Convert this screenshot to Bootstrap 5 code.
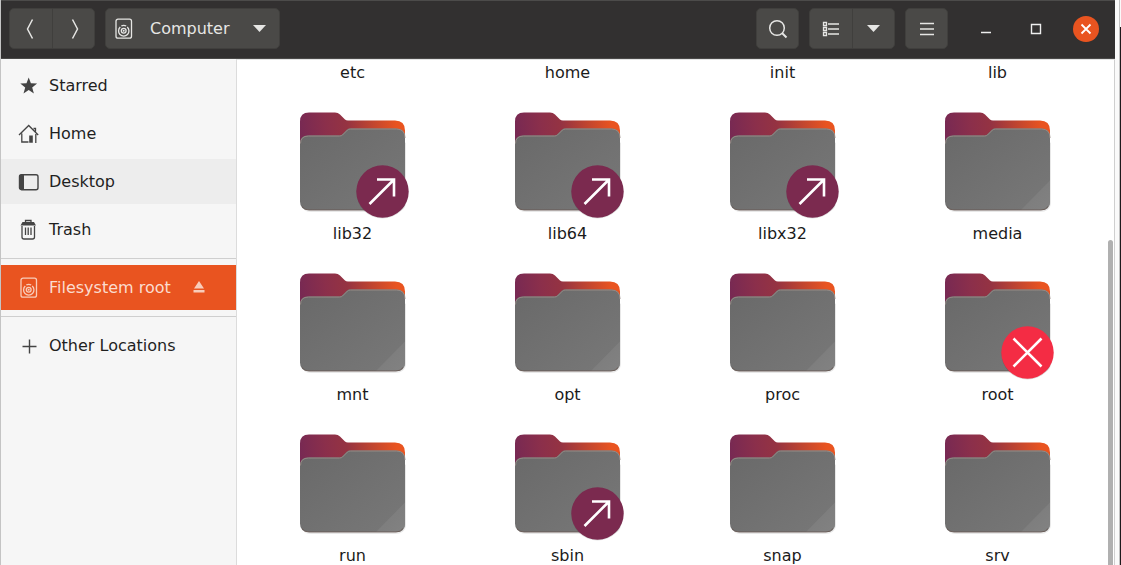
<!DOCTYPE html>
<html lang="en">
<head>
<meta charset="utf-8">
<meta name="viewport" content="width=device-width, initial-scale=1">
<title>Computer</title>
<link href="https://cdn.jsdelivr.net/npm/bootstrap@5.3.0/dist/css/bootstrap.min.css" rel="stylesheet">
<style>
body{font-family:"DejaVu Sans",sans-serif;font-size:16px;line-height:24px;color:#1b1b1b;background:#fafafa}
svg{display:block;flex:none}
.app-window{border-left:1px solid #c4c4c4;min-width:0}
.desk-gap{width:5px;border-right:1px solid #c2c2c2}
.desk-edge{width:1px;margin-top:27px;background:#1d1a1c}
.title-bar{height:59px;gap:10px;background:#323030;border-top:1px solid #4c4b4a;border-bottom:1px solid #4a4948;padding:0 16px 1px 8px}
.tool-btn{--bs-btn-bg:#4a4947;--bs-btn-color:#e6e6e4;--bs-btn-border-color:#403f3d;--bs-btn-hover-bg:#555;--bs-btn-hover-color:#fff;--bs-btn-padding-x:0;--bs-btn-padding-y:0;--bs-btn-border-radius:5px;width:43px;height:41px;font-size:16px}
.btn-group .tool-btn:first-child{width:44px}
.path-btn{width:175px;padding:0 13px 0 7px}
.win-btn{width:26px;height:26px;color:#eee}
.win-set{gap:24px;margin-left:15px}
.close-btn,.close-btn:hover{background:#e95420;color:#fff}
.side-pane{width:236px;background:#f6f6f6;border-right:1px solid #dcdcdc;padding-top:4px}
.place{height:45px;padding:2px 17px 0;color:#1f1f1f;gap:10px}
.place-group{gap:3px}
.place svg{color:#444}
.place.hovered{background:#ededed}
.place-mount,.place-mount .place{background:#e95420;color:#fbdccf}
.place-mount .place{padding-right:0}
.place-mount svg{color:#f8cdbb}
.eject{width:22px;height:22px;margin-left:17px}
.side-line{border-top:1px solid #cfcfcf;opacity:1;margin:6px 0}
.file-pane{border-top:1px solid #e4e4e4;border-right:1px solid #cfcfcf;padding:0 9px 0 8px;background:#fff;min-width:0}
.file-item{padding-top:28px;gap:11px}
.file-item.cut{padding-top:1px}
.scroll-thumb{width:5px;right:1px;top:180px;bottom:0;background:#b0b0b0;border-radius:3px 3px 0 0}
</style>
</head>
<body class="vh-100 d-flex overflow-hidden">
<svg width="0" height="0" class="position-absolute" aria-hidden="true">
  <defs>
    <linearGradient id="backFill" x1="0" y1="20" x2="105" y2="8" gradientUnits="userSpaceOnUse">
      <stop offset="0" stop-color="#772953"/><stop offset=".25" stop-color="#8b2f4b"/><stop offset=".45" stop-color="#953342"/><stop offset=".7" stop-color="#c2462f"/><stop offset=".92" stop-color="#e95420"/>
    </linearGradient>
    <linearGradient id="frontFill" x1="0" y1="0" x2="1" y2="1">
      <stop offset="0" stop-color="#696969"/><stop offset="1" stop-color="#787878"/>
    </linearGradient>
    <linearGradient id="foldFill" x1="0" y1="0" x2="1" y2="1">
      <stop offset=".4" stop-color="#7d7d7d"/><stop offset="1" stop-color="#828282"/>
    </linearGradient>
    <symbol id="folder" viewBox="0 0 105 98" overflow="visible">
      <path d="M2 88v2q0 9 9 9h83q12 0 12-10V30l-3-2z" fill="#000" opacity=".09"/>
      <path d="M0 89V8.500Q0-.5 9-.5h26q3 0 5 2l5 5q1 1 3 1h47q10 0 10 10v60z" fill="url(#backFill)"/>
      <path d="M0 88.500V30.500q0-8 8-8h31q2 0 3-1l5-5q1-1 3-1h46q9 0 9 9v64q0 8.500-9 8.500H9Q0 97 0 88.500z" fill="url(#frontFill)"/>
      <path d="M.5 30.500q0-7.500 8-7.500h31q2 0 3-1l5-5q1-1 3-1h46q8.500 0 8.500 9" fill="none" stroke="#958b86" stroke-width="1"/>
      <path d="M76 97L105 67.500v21q0 8.500-9 8.500z" fill="url(#foldFill)"/>
      <path d="M2 93.500q2 3.500 7 3.500h87q5 0 7-3.500" fill="none" stroke="#65544e" stroke-width=".8"/>
    </symbol>
    <symbol id="linkMark" viewBox="0 0 105 98" overflow="visible">
      <circle cx="82.500" cy="79.500" r="26" fill="#000" opacity=".12"/>
      <circle cx="82.500" cy="78.500" r="26.200" fill="#7b2a4f"/>
      <path d="M69.500 91L94 66.500M77 66.500h17v17" fill="none" stroke="#fff" stroke-width="2.600"/>
    </symbol>
    <symbol id="denyMark" viewBox="0 0 105 98" overflow="visible">
      <circle cx="82.500" cy="79.500" r="26" fill="#000" opacity=".15"/>
      <circle cx="82.500" cy="78.500" r="26.200" fill="#f42c44"/>
      <path d="M68.500 64.500l28 28m0-28l-28 28" fill="none" stroke="#fff" stroke-width="2.600"/>
    </symbol>
    <symbol id="disk" viewBox="0 0 21 22">
      <g fill="none" stroke="currentColor" stroke-width="1.300"><rect x="3" y="1.200" width="15.500" height="19" rx="2"/><path d="M7.300 9A5.200 5.200 0 1 0 14.200 9"/><path d="M8.300 8Q10.700 6.600 13.200 8"/><circle cx="10.700" cy="12.700" r="2.400"/></g>
      <circle cx="10.700" cy="12.700" r="1" fill="currentColor"/>
    </symbol>
  </defs>
</svg>

<main class="app-window flex-fill d-flex flex-column">
  <header class="title-bar d-flex align-items-center">
    <div class="btn-group">
      <button class="btn tool-btn d-flex align-items-center justify-content-center" aria-label="Back"><svg width="20" height="22" fill="none" stroke="currentColor" stroke-width="1.500"><path d="M11.500 1.500L6.500 11l5 9.500"/></svg></button>
      <button class="btn tool-btn d-flex align-items-center justify-content-center" aria-label="Forward"><svg width="20" height="22" fill="none" stroke="currentColor" stroke-width="1.500"><path d="M8.500 1.500l5 9.500-5 9.500"/></svg></button>
    </div>
    <button class="btn tool-btn path-btn d-flex align-items-center me-auto">
      <svg class="me-3" width="21" height="22"><use href="#disk"/></svg><span>Computer</span>
      <svg class="ms-auto" width="13" height="7" fill="currentColor"><path d="M0 0h13L6.500 7z"/></svg>
    </button>
    <button class="btn tool-btn d-flex align-items-center justify-content-center" aria-label="Search"><svg width="22" height="22" fill="none" stroke="currentColor"><circle cx="10" cy="10" r="7.300" stroke-width="1.500"/><path d="M15 15l4.500 4.500" stroke-width="2"/></svg></button>
    <div class="btn-group">
      <button class="btn tool-btn d-flex align-items-center justify-content-center" aria-label="List view"><svg width="18" height="18" fill="none" stroke="currentColor" stroke-width="1.300"><path d="M1.500 2.500h3v3h-3zM1.500 7.500h3v3h-3zM1.500 12.500h3v3h-3zM6 4h11M6 9h11M6 14h11"/></svg></button>
      <button class="btn tool-btn d-flex align-items-center justify-content-center" aria-label="View options"><svg width="13" height="7" fill="currentColor"><path d="M0 0h13L6.500 7z"/></svg></button>
    </div>
    <button class="btn tool-btn d-flex align-items-center justify-content-center" aria-label="Menu"><svg width="14" height="14" stroke="currentColor" stroke-width="1.300"><path d="M0 1.500h14M0 7h14M0 12.500h14"/></svg></button>
    <div class="win-set d-flex">
      <button class="btn win-btn p-0 border-0 d-flex align-items-center justify-content-center" aria-label="Minimize"><svg width="12" height="12" stroke="currentColor" stroke-width="1.500"><path d="M1 9.500h10"/></svg></button>
      <button class="btn win-btn p-0 border-0 d-flex align-items-center justify-content-center" aria-label="Maximize"><svg width="12" height="12" fill="none" stroke="currentColor" stroke-width="1.400"><path d="M1.500 1.500h9v9h-9z"/></svg></button>
      <button class="btn win-btn close-btn rounded-circle p-0 border-0 d-flex align-items-center justify-content-center" aria-label="Close"><svg width="12" height="12" stroke="currentColor" stroke-width="1.800"><path d="M1.500 1.500l9 9m0-9l-9 9"/></svg></button>
    </div>
  </header>

  <div class="d-flex flex-fill overflow-hidden">
    <nav class="side-pane flex-shrink-0" aria-label="Places">
      <div class="place-group d-flex flex-column">
        <a href="#" class="place d-flex align-items-center text-decoration-none"><svg width="21" height="22" fill="currentColor"><path d="M10.700 2.500l2.200 5.800 6.200.3-4.900 3.800 1.700 6.200-5.200-3.500-5.200 3.500 1.700-6.200-4.900-3.800 6.200-.3z"/></svg>Starred</a>
        <a href="#" class="place d-flex align-items-center text-decoration-none"><svg width="21" height="22" fill="none" stroke="currentColor" stroke-width="1.300"><path d="M1 12L10.700 2.500l9.500 9.500M3.800 10.500v8.500h6.700M17.800 11v9M15.500 5.500h2v3"/><path d="M11.200 12.500h3.600v7.200h-3.600z" fill="currentColor" stroke="none"/></svg>Home</a>
        <a href="#" class="place hovered d-flex align-items-center text-decoration-none"><svg width="21" height="22"><rect x="1.500" y="3.700" width="18.500" height="15" rx="2" fill="none" stroke="currentColor" stroke-width="1.400"/><path d="M1 5.500q0-2 2-2h3v15H3q-2 0-2-2z" fill="currentColor"/></svg>Desktop</a>
        <a href="#" class="place d-flex align-items-center text-decoration-none"><svg width="21" height="22" fill="none" stroke="currentColor" stroke-width="1.300"><path d="M4 7v11q0 2 2 2h8.500q2 0 2-2V7M7.500 8.500v7.500M10.200 8.500v7.500M13 8.500v7.500M7.500 3V1.500h5.500V3"/><path d="M4.500 3H16l2 3.500H2.500z" fill="currentColor" stroke="none"/></svg>Trash</a>
      </div>
      <hr class="side-line">
      <div class="place-mount d-flex align-items-center">
        <a href="#" class="place d-flex align-items-center text-decoration-none"><svg width="21" height="22"><use href="#disk"/></svg>Filesystem root</a>
        <button class="btn eject p-0 border-0 d-flex align-items-center justify-content-center" aria-label="Eject"><svg width="12" height="12" fill="currentColor"><path d="M6 0l5 7.500H1zM.5 9h11v2.500H.5z"/></svg></button>
      </div>
      <hr class="side-line">
      <a href="#" class="place d-flex align-items-center text-decoration-none"><svg width="21" height="22" stroke="currentColor" stroke-width="1.400"><path d="M11.500 4.500v14M4.500 11.500h14"/></svg>Other Locations</a>
    </nav>

    <section class="file-pane position-relative flex-fill overflow-hidden" aria-label="Files">
      <div class="row row-cols-4 g-0">
        <div class="col file-item cut d-flex flex-column align-items-center">etc</div>
        <div class="col file-item cut d-flex flex-column align-items-center">home</div>
        <div class="col file-item cut d-flex flex-column align-items-center">init</div>
        <div class="col file-item cut d-flex flex-column align-items-center">lib</div>
        <div class="col file-item d-flex flex-column align-items-center"><svg width="105" height="98" overflow="visible"><use href="#folder"/><use href="#linkMark"/></svg>lib32</div>
        <div class="col file-item d-flex flex-column align-items-center"><svg width="105" height="98" overflow="visible"><use href="#folder"/><use href="#linkMark"/></svg>lib64</div>
        <div class="col file-item d-flex flex-column align-items-center"><svg width="105" height="98" overflow="visible"><use href="#folder"/><use href="#linkMark"/></svg>libx32</div>
        <div class="col file-item d-flex flex-column align-items-center"><svg width="105" height="98" overflow="visible"><use href="#folder"/></svg>media</div>
        <div class="col file-item d-flex flex-column align-items-center"><svg width="105" height="98" overflow="visible"><use href="#folder"/></svg>mnt</div>
        <div class="col file-item d-flex flex-column align-items-center"><svg width="105" height="98" overflow="visible"><use href="#folder"/></svg>opt</div>
        <div class="col file-item d-flex flex-column align-items-center"><svg width="105" height="98" overflow="visible"><use href="#folder"/></svg>proc</div>
        <div class="col file-item d-flex flex-column align-items-center"><svg width="105" height="98" overflow="visible"><use href="#folder"/><use href="#denyMark"/></svg>root</div>
        <div class="col file-item d-flex flex-column align-items-center"><svg width="105" height="98" overflow="visible"><use href="#folder"/></svg>run</div>
        <div class="col file-item d-flex flex-column align-items-center"><svg width="105" height="98" overflow="visible"><use href="#folder"/><use href="#linkMark"/></svg>sbin</div>
        <div class="col file-item d-flex flex-column align-items-center"><svg width="105" height="98" overflow="visible"><use href="#folder"/></svg>snap</div>
        <div class="col file-item d-flex flex-column align-items-center"><svg width="105" height="98" overflow="visible"><use href="#folder"/></svg>srv</div>
      </div>
      <div class="scroll-thumb position-absolute"></div>
    </section>
  </div>
</main>
<div class="desk-gap flex-shrink-0"></div>
<div class="desk-edge flex-shrink-0"></div>
<script src="https://cdn.jsdelivr.net/npm/bootstrap@5.3.0/dist/js/bootstrap.bundle.min.js"></script>
</body></html>
